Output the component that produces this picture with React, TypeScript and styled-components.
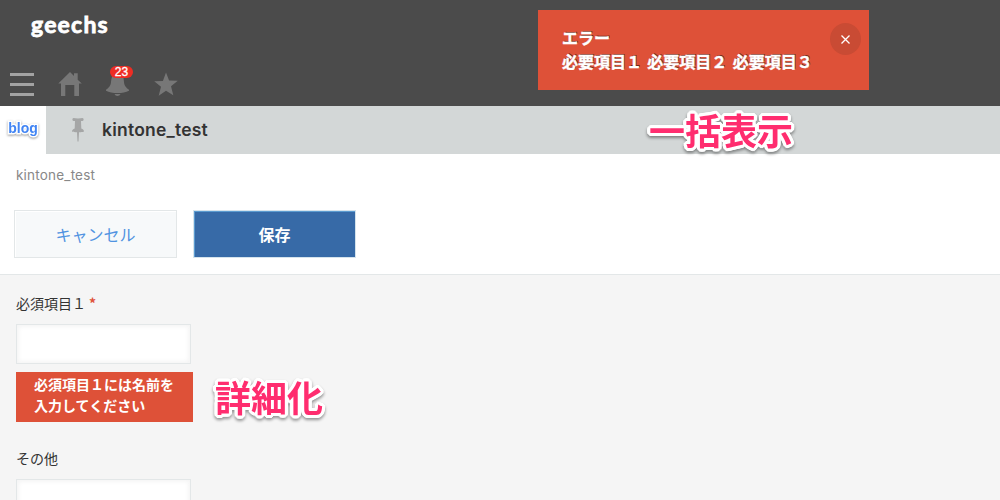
import React from 'react';
import styled, { createGlobalStyle } from 'styled-components';

const GlobalStyle = createGlobalStyle`
  * {
    box-sizing: border-box;
  }

  body {
    margin: 0;
    overflow: hidden;
    background: #f5f5f5;
    color: #333;
    font-family: Inter, 'Noto Sans CJK JP', sans-serif;
    font-size: 14px;
  }
`;

const Page = styled.div`
  position: relative;
  width: 1000px;
  height: 500px;
  overflow: hidden;
`;

const Header = styled.header`
  height: 106px;
  padding: 9px 10px 0;
  background: #4b4b4b;
`;

const Logo = styled.div`
  height: 57px;
  padding-left: 21px;
  color: #fff;
  font-family: Lato, sans-serif;
  font-size: 23px;
  font-weight: 700;
  line-height: 30px;
  letter-spacing: 1.2px;
  -webkit-text-stroke: 0.8px #fff;
`;

const Toolbar = styled.nav`
  display: flex;
  gap: 24px;
`;

const ToolbarItem = styled.div`
  position: relative;
  width: 24px;
  height: 36px;
  padding-top: 6px;

  svg {
    display: block;
  }
`;

const Badge = styled.span`
  position: absolute;
  top: 0;
  left: 4px;
  width: 23px;
  height: 12px;
  border-radius: 6px;
  background: #ee2d24;
  color: #fff;
  font-family: 'Liberation Sans', sans-serif;
  font-size: 12px;
  line-height: 13px;
  text-align: center;
  -webkit-text-stroke: 0.3px #fff;
`;

const TitleBar = styled.div`
  display: flex;
  align-items: center;
  height: 48px;
  background: #d3d7d7;
`;

const AppIcon = styled.div`
  width: 46px;
  height: 48px;
  background: #fff;
  color: #4285f4;
  font-family: 'Liberation Sans', sans-serif;
  font-size: 14px;
  font-weight: bold;
  line-height: 45px;
  text-align: center;
`;

const AppIconText = styled.span`
  display: inline-block;
  -webkit-text-stroke: 3px #fff;
  paint-order: stroke fill;
  filter: drop-shadow(0 1px 1px rgba(0, 0, 0, 0.4));
`;

const PinIcon = styled.svg`
  margin: 0 17px 0 25px;
`;

const AppTitle = styled.h1`
  margin: 0;
  font-size: 17.5px;
  font-weight: 600;
  line-height: 48px;
  letter-spacing: 0.22px;
`;

const Actions = styled.section`
  height: 121px;
  padding: 0 14px;
  border-bottom: 1px solid #e3e7e8;
  background: #fff;
`;

const Breadcrumb = styled.div`
  height: 56px;
  padding-left: 2px;
  color: #888;
  font-size: 13.5px;
  line-height: 42px;
  letter-spacing: 0.2px;
`;

const ButtonRow = styled.div`
  display: flex;
  gap: 16px;
`;

const Button = styled.button<{ $primary?: boolean }>`
  width: 163px;
  height: 48px;
  padding: 0 0 1px;
  border: 1px solid ${(p) => (p.$primary ? '#d5e3ec' : '#e3e7e8')};
  background: ${(p) => (p.$primary ? '#376aa7' : '#f7f9fa')};
  box-shadow: ${(p) => (p.$primary ? 'inset 1px 1px 0 #5b9bd0' : 'inset 1px 1px 0 #fff')};
  color: ${(p) => (p.$primary ? '#fff' : '#5093e1')};
  font-family: 'Noto Sans CJK JP', sans-serif;
  font-size: 16px;
  font-weight: ${(p) => (p.$primary ? 700 : 400)};
`;

const Form = styled.form`
  padding: 18px 16px 0;
`;

const Field = styled.div`
  margin-bottom: 26px;
`;

const Label = styled.label`
  display: block;
  height: 31px;
  font-family: 'Noto Sans CJK JP', sans-serif;
  line-height: 21px;
`;

const Required = styled.span`
  margin-left: 3px;
  color: #e0523a;
  font-weight: 700;
`;

const Input = styled.input`
  display: block;
  width: 175px;
  height: 40px;
  border: 1px solid #e3e7e8;
  background: #fff;
  box-shadow: 2px 2px 4px #f5f5f5 inset, -2px -2px 4px #f5f5f5 inset;
`;

const FieldError = styled.div`
  width: 177px;
  height: 50px;
  margin-top: 8px;
  padding: 2px 18px 0;
  background: #de5138;
  color: #fff;
  font-family: 'Noto Sans CJK JP', sans-serif;
  font-weight: 700;
  line-height: 21px;
`;

const Notifier = styled.div`
  position: absolute;
  top: 10px;
  left: 538px;
  width: 331px;
  height: 80px;
  padding: 15px 24px;
  background: #de5138;
  color: #fff;
  font-family: 'Noto Sans CJK JP', sans-serif;
  font-size: 16px;
  font-weight: 700;
  line-height: 24px;
  white-space: nowrap;
  text-shadow: 1px -1px 0 rgba(0, 0, 0, 0.5);
  -webkit-text-stroke: 0.4px #fff;
`;

const NotifierItems = styled.div`
  word-spacing: 1.7px;
`;

const CloseButton = styled.button`
  position: absolute;
  top: 13px;
  right: 8px;
  display: grid;
  place-items: center;
  width: 31px;
  height: 32px;
  padding: 0;
  border: 0;
  border-radius: 50%;
  background: #c94b34;
`;

const Annotation = styled.div<{ $x: number; $y: number }>`
  position: absolute;
  top: ${(p) => p.$y}px;
  left: ${(p) => p.$x}px;
  color: #ff2d6f;
  font-family: 'Noto Sans CJK JP', sans-serif;
  font-size: 36px;
  font-weight: 700;
  line-height: 44px;
  white-space: nowrap;
  text-shadow: 3px 0 #fff, -3px 0 #fff, 0 3px #fff, 0 -3px #fff, 2px 2px #fff, -2px 2px #fff, 2px -2px #fff,
    -2px -2px #fff, 3px 1px #fff, 3px -1px #fff, -3px 1px #fff, -3px -1px #fff, 1px 3px #fff, -1px 3px #fff,
    1px -3px #fff, -1px -3px #fff, 1px 1px #fff, -1px -1px #fff;
  filter: drop-shadow(0 2px 1.5px rgba(0, 0, 0, 0.4));
`;

export default function App() {
  return (
    <Page>
      <GlobalStyle />
      <Header>
        <Logo>geechs</Logo>
        <Toolbar>
          <ToolbarItem>
            <svg width="24" height="24" fill="#a3a3a3">
              <path d="M0 1h24v3H0zM0 11h24v3H0zM0 21h24v3H0z" />
            </svg>
          </ToolbarItem>
          <ToolbarItem>
            <svg width="24" height="24" fill="#777">
              <path d="M12 0l4 4V1.200h3.700v6.500L23.800 11.500H21V24h-4.700V13H7.300v11H3V11.500H.3z" />
            </svg>
          </ToolbarItem>
          <ToolbarItem>
            <svg width="24" height="24" fill="#777">
              <path d="M8 2h8c1.200 1.500 1.600 4 2 8 .3 4 2 5.500 5 7.700v1C20 20.500 16 21 11.500 21S3 20.500 0 18.700v-1c3-2.200 4.700-3.700 5-7.700.4-4 1.200-6.500 3-8zM8.500 22h6c-.6 1.200-1.600 2-3 2s-2.400-.8-3-2z" />
            </svg>
            <Badge>23</Badge>
          </ToolbarItem>
          <ToolbarItem>
            <svg width="24" height="24" fill="#777">
              <path d="M12 .5l3.100 8 8.700.3-6.800 5.500 2.300 8.900L12 18.800l-7.300 4.900L7 14.800.2 9.300l8.700-.4z" />
            </svg>
          </ToolbarItem>
        </Toolbar>
      </Header>

      <TitleBar>
        <AppIcon>
          <AppIconText>blog</AppIconText>
        </AppIcon>
        <PinIcon width="14" height="24" fill="#a5a6a6">
          <path d="M2.500 0C5 .5 9 .5 11.500 0c1.500.5 1.500 2.500 0 3H10l.3 7.500c1.700.6 2.700 1.500 2.700 3-1.500.6-3 .8-5 .8L7.500 23.500h-1L6 14.300c-2 0-3.500-.2-5-.8 0-1.500 1-2.400 2.700-3L4 3H2.500C1 2.500 1 .5 2.500 0z" />
        </PinIcon>
        <AppTitle>kintone_test</AppTitle>
      </TitleBar>

      <Actions>
        <Breadcrumb>kintone_test</Breadcrumb>
        <ButtonRow>
          <Button type="button">キャンセル</Button>
          <Button type="button" $primary>保存</Button>
        </ButtonRow>
      </Actions>

      <Form>
        <Field>
          <Label>
            必須項目１<Required>*</Required>
          </Label>
          <Input />
          <FieldError>必須項目１には名前を入力してください</FieldError>
        </Field>
        <Field>
          <Label>その他</Label>
          <Input />
        </Field>
      </Form>

      <Notifier>
        <div>エラー</div>
        <NotifierItems>必要項目１ 必要項目２ 必要項目３</NotifierItems>
        <CloseButton type="button" aria-label="閉じる">
          <svg width="9" height="9" stroke="#fff" strokeWidth="1.300">
            <path d="M.5.5l8 8M8.500.5l-8 8" />
          </svg>
        </CloseButton>
      </Notifier>

      <Annotation $x={649} $y={107}>一括表示</Annotation>
      <Annotation $x={215} $y={374}>詳細化</Annotation>
    </Page>
  );
}
